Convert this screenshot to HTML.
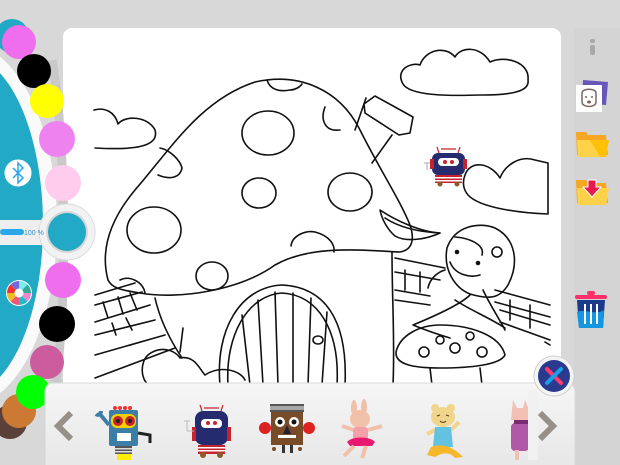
<!DOCTYPE html>
<html><head><meta charset="utf-8"><style>
html,body{margin:0;padding:0;width:620px;height:465px;overflow:hidden;background:#d8d8d8;font-family:"Liberation Sans",sans-serif}
</style></head><body>
<svg width="620" height="465" viewBox="0 0 620 465" xmlns="http://www.w3.org/2000/svg" style="position:absolute;left:0;top:0">
<defs>
<linearGradient id="bar" x1="0" y1="0" x2="0" y2="1"><stop offset="0" stop-color="#f6f6f6"/><stop offset="1" stop-color="#e6e6e6"/></linearGradient>
</defs>
<rect width="620" height="465" fill="#d8d8d8"/>
<rect x="574" y="28" width="46" height="437" fill="#d4d4d4"/>
<!-- canvas -->
<rect x="63" y="28" width="498" height="400" rx="9" fill="#fff"/>
<!-- drawing -->
<g fill="none" stroke="#111" stroke-width="1.6" stroke-linecap="round" stroke-linejoin="round">
<path d="M403,84 C395,70 410,62 420,65 C425,50 445,45 455,57 C460,47 480,45 490,62 C505,55 530,62 528,80 C530,92 510,95 480,95 C450,96 410,96 403,84Z"/>
<path d="M94,110 C105,107 115,112 118,124 C125,115 148,116 155,130 C160,148 130,150 95,148"/>
<path d="M465,175 C470,160 490,162 500,178 C505,165 520,155 535,160 L548,163 L548,214 C520,213 480,208 468,195 C462,188 463,180 465,175Z"/>
<path d="M108,280 C100,250 110,220 135,190 C170,150 200,100 255,82 C300,72 340,90 360,130 C380,170 400,200 410,225 C415,240 412,250 400,252 C360,250 310,245 275,265 C240,290 180,300 140,293 C120,290 112,288 108,280Z"/>
<ellipse cx="268" cy="133" rx="26" ry="22"/>
<ellipse cx="350" cy="192" rx="22" ry="19"/>
<ellipse cx="259" cy="193" rx="17" ry="15"/>
<ellipse cx="154" cy="230" rx="27" ry="23"/>
<ellipse cx="212" cy="276" rx="16" ry="14"/>
<path d="M160,148 C170,150 180,160 182,168 C180,178 170,180 158,175"/>
<path d="M291,246 C292,236 305,230 315,232 C330,236 335,245 334,252"/>
<path d="M267,80 C270,90 280,92 290,90 C295,90 300,87 302,84"/>
<path d="M325,107 C320,120 325,132 340,130"/>
<path d="M120,280 C130,275 143,282 145,293"/>
<path d="M380,210 C395,220 420,232 440,233 C425,240 405,242 395,236 C388,230 382,220 380,210Z"/><path d="M385,218 C400,228 420,232 440,233"/>
<path d="M355,130 L366,98 M372,163 L392,135"/>
<path d="M364,104 L375,96 L413,117 L410,133 L399,135 L365,113Z"/>
<path d="M155,298 C160,320 170,340 182,358 M392,252 C392,300 395,340 393,385"/>
<path d="M220,385 C215,330 240,287 282,285 C325,287 348,320 345,385"/>
<path d="M228,385 C225,335 248,295 282,293 C318,295 340,330 337,385"/>
<path d="M250,385 L242,315 M263,385 L258,300 M278,385 L275,292 M293,385 L293,293 M308,385 L311,298 M322,385 L327,312"/>
<ellipse cx="318" cy="340" rx="5" ry="4"/>
<path d="M95,295 L135,283 M95,305 L142,292 M95,322 L150,305 M95,335 L155,320 M95,355 L165,335 M95,378 L175,348 M103,302 L108,318 M118,297 L123,314 M130,293 L137,310 M112,323 L116,335 M126,318 L132,330"/>
<path d="M148,355 C140,362 140,380 150,386 M148,355 C160,345 175,350 180,358 C195,355 200,370 205,375 C220,365 240,370 245,380"/>
<path d="M180,352 L183,328"/>
<path d="M395,258 L445,268 M395,272 L440,280 M395,290 L430,296 M395,300 L430,305 M405,270 L405,290 M420,272 L420,292 M495,290 L550,305 M495,302 L550,317 M500,310 L550,325 M500,322 L550,340 M510,300 L510,320 M530,305 L530,328 M545,342 L550,345"/>
<path d="M447,248 C455,225 480,222 495,228 C515,238 520,262 508,285 C500,298 490,300 470,294 C455,288 443,270 447,248Z"/>
<path d="M455,237 C470,238 485,245 482,255"/>
<circle cx="457" cy="252" r="1.5" fill="#111"/><circle cx="478" cy="263" r="1.5" fill="#111"/>
<path d="M450,262 C455,275 470,278 480,275"/>
<circle cx="497" cy="252" r="5"/>
<path d="M445,270 C438,272 430,278 428,288 M470,295 C460,305 430,318 413,325 C425,330 440,335 450,338 M483,290 C490,305 500,320 505,330"/>
<path d="M455,300 C470,310 490,318 505,328"/>
<path d="M396,352 C400,335 420,325 440,325 C470,325 500,335 505,355 C500,365 470,368 440,368 C415,368 395,365 396,352Z"/>
<circle cx="424" cy="352" r="5"/><circle cx="455" cy="348" r="5"/><circle cx="482" cy="352" r="5"/><circle cx="440" cy="340" r="4"/><circle cx="470" cy="336" r="4"/>
<path d="M430,368 L432,385 M480,368 L482,385"/>
</g>
<g transform="translate(427,145)">
<rect x="5" y="8" width="33" height="22" rx="6" fill="#262a6e"/>
<rect x="3" y="14" width="4" height="10" fill="#c8232c"/><rect x="36" y="14" width="4" height="10" fill="#c8232c"/>
<rect x="11" y="13" width="21" height="8" rx="4" fill="#fff"/>
<circle cx="18" cy="17" r="2" fill="#c8232c"/><circle cx="25" cy="17" r="2" fill="#c8232c"/>
<rect x="8" y="30" width="27" height="8" fill="#c8232c"/><rect x="8" y="32" width="27" height="1.5" fill="#fff"/><rect x="8" y="35" width="27" height="1.5" fill="#fff"/>
<circle cx="13" cy="39" r="2.5" fill="#8b5a2b"/><circle cx="30" cy="39" r="2.5" fill="#8b5a2b"/>
<path d="M12,8 L10,2 M31,8 L33,2 M14,4 L29,4" stroke="#c8232c" stroke-width="1.2"/>
<path d="M0,18 L0,25 M-3,18 L3,18" stroke="#aaa" stroke-width="1"/>
</g>
<!-- left area -->
<rect x="44" y="380" width="19" height="85" fill="#cfcfcf"/>
<ellipse cx="-35" cy="225" rx="92" ry="182" fill="#fafafa"/>
<path d="M52,60 C66,140 68,300 55,390" fill="none" stroke="#c9c9c9" stroke-width="9"/>
<ellipse cx="-35" cy="225" rx="78" ry="170" fill="#21a9c6"/>
<!-- slider -->
<path d="M0,220 L42,220 C50,220 52,214 62,208 L62,256 C52,250 50,245 42,245 L0,245Z" fill="#eeeeee"/>
<rect x="0" y="229" width="24" height="6" rx="3" fill="#2aa7e6"/>
<circle cx="67" cy="232" r="28" fill="#f2f2f2" stroke="#dcdcdc" stroke-width="1"/>
<circle cx="67" cy="232" r="21" fill="#d6d6d6"/>
<circle cx="67" cy="232" r="19" fill="#21a9c6"/>
<text x="24" y="235" font-size="7" fill="#3a8fc8">100 %</text>
<!-- dots -->
<circle cx="12" cy="36" r="17" fill="#21a9c6"/>
<circle cx="19" cy="42" r="17" fill="#ee6eee"/>
<circle cx="34" cy="71" r="17" fill="#000"/>
<circle cx="47" cy="101" r="17" fill="#ffff00"/>
<circle cx="57" cy="139" r="18" fill="#ee82ee"/>
<circle cx="63" cy="183" r="18" fill="#ffccee"/>
<circle cx="63" cy="280" r="18" fill="#ee6eee"/>
<circle cx="57" cy="324" r="18" fill="#000"/>
<circle cx="47" cy="362" r="17" fill="#cc5c9e"/>
<circle cx="10" cy="422" r="17" fill="#5a4038"/>
<circle cx="19" cy="411" r="17" fill="#cc7a33"/>
<circle cx="33" cy="392" r="17" fill="#00ff00"/>
<circle cx="18" cy="173" r="14" fill="#fff" stroke="#21a9c6" stroke-width="1"/>
<path d="M13,168 L23,178 L18,183 L18,163 L23,168 L13,178" fill="none" stroke="#2aa7e6" stroke-width="1.5"/>
<g transform="translate(19,293)">
<circle r="13" fill="#fff"/>
<path d="M0,0 L0,-12 A12,12 0 0 1 8.5,-8.5Z" fill="#7ee"/>
<path d="M0,0 L8.5,-8.5 A12,12 0 0 1 12,0Z" fill="#3a9"/>
<path d="M0,0 L12,0 A12,12 0 0 1 8.5,8.5Z" fill="#e8c"/>
<path d="M0,0 L8.5,8.5 A12,12 0 0 1 0,12Z" fill="#2bc"/>
<path d="M0,0 L0,12 A12,12 0 0 1 -8.5,8.5Z" fill="#e57"/>
<path d="M0,0 L-8.5,8.5 A12,12 0 0 1 -12,0Z" fill="#eb2"/>
<path d="M0,0 L-12,0 A12,12 0 0 1 -8.5,-8.5Z" fill="#e33"/>
<path d="M0,0 L-8.5,-8.5 A12,12 0 0 1 0,-12Z" fill="#76d"/>
<circle r="4.5" fill="#fff"/>
</g>
<!-- right icons -->
<rect x="590" y="39" width="5" height="4" rx="2" fill="#a8a8a8"/><rect x="590" y="45" width="5" height="10" rx="2" fill="#a8a8a8"/>
<path d="M583,80 L608,82 L606,105 L582,103Z" fill="#6a55b8"/>
<rect x="576" y="85" width="26" height="27" fill="#fff"/>
<path d="M582,93 C582,88 596,88 596,93 L596,102 C596,108 582,108 582,102Z" fill="none" stroke="#7a6660" stroke-width="1.5"/>
<circle cx="586" cy="97" r="1" fill="#7a6660"/><circle cx="592" cy="97" r="1" fill="#7a6660"/><ellipse cx="589" cy="102" rx="2" ry="1.5" fill="#7a6660"/>
<path d="M576,132 L586,132 L588,135 L606,135 L608,155 L577,155Z" fill="#f5a623"/>
<path d="M577,140 L609,140 L606,157 L578,157Z" fill="#ffd24a"/>
<path d="M590,140 L609,140 L606,157 L600,157Z" fill="#ffc107"/>
<path d="M576,180 L586,180 L588,183 L606,183 L608,203 L577,203Z" fill="#f5a623"/>
<path d="M577,188 L609,188 L606,205 L578,205Z" fill="#ffd24a"/>
<path d="M588,180 L596,180 L596,187 L601,187 L592,197 L583,187 L588,187Z" fill="#e8194f" stroke="#fff" stroke-width="1"/>
<rect x="575" y="295" width="32" height="4" rx="2" fill="#ff2f6a"/>
<rect x="587" y="291" width="8" height="4" rx="2" fill="#ff2f6a"/>
<path d="M577,300 L605,300 L603,328 L579,328Z" fill="#1a3a8a"/>
<path d="M577,312 C585,308 595,316 604,310 L603,328 L579,328Z" fill="#1596e0"/>
<rect x="584" y="304" width="2" height="20" fill="#fff"/><rect x="590" y="304" width="2" height="20" fill="#fff"/><rect x="596" y="304" width="2" height="20" fill="#fff"/>
<!-- bottom bar -->
<rect x="45" y="383" width="530" height="90" rx="8" fill="url(#bar)"/>
<rect x="45" y="383" width="530" height="90" rx="8" fill="none" stroke="#dadada"/>
<path d="M71,413 L58,426 L71,439" fill="none" stroke="#969089" stroke-width="6"/>
<path d="M540,413 L553,426 L540,439" fill="none" stroke="#969089" stroke-width="6"/>
<g transform="translate(95,405)">
<circle cx="20" cy="3" r="2" fill="#e33"/><circle cx="25" cy="3" r="2" fill="#e33"/><circle cx="30" cy="3" r="2" fill="#e33"/><circle cx="35" cy="3" r="2" fill="#e33"/>
<rect x="14" y="5" width="29" height="36" rx="2" fill="#3d7ea6"/>
<rect x="16" y="9" width="25" height="14" rx="6" fill="#f2d000"/>
<circle cx="23" cy="16" r="5" fill="#c8232c"/><circle cx="35" cy="16" r="5" fill="#c8232c"/>
<circle cx="23" cy="16" r="2" fill="#222"/><circle cx="35" cy="16" r="2" fill="#222"/>
<rect x="22" y="28" width="14" height="8" fill="#fff"/>
<path d="M14,20 L4,8 M1,9 C3,11 6,9 6,6" stroke="#3d7ea6" stroke-width="4" fill="none"/>
<path d="M43,28 L55,30 L55,38" stroke="#222" stroke-width="3" fill="none"/>
<rect x="20" y="41" width="17" height="8" fill="#555"/><rect x="20" y="43" width="17" height="1.5" fill="#ddd"/><rect x="20" y="46" width="17" height="1.5" fill="#ddd"/>
<rect x="22" y="49" width="14" height="6" fill="#ffee00"/>
</g>
<g transform="translate(190,403)">
<path d="M12,8 L10,2 M31,8 L33,2 M14,5 L29,5" stroke="#c8232c" stroke-width="1.2"/>
<rect x="5" y="8" width="33" height="34" rx="8" fill="#262a6e"/>
<rect x="2" y="24" width="4" height="14" fill="#c8232c"/><rect x="37" y="24" width="4" height="14" fill="#c8232c"/>
<rect x="11" y="16" width="21" height="9" rx="4" fill="#fff"/>
<circle cx="18" cy="20" r="2" fill="#c8232c"/><circle cx="25" cy="20" r="2" fill="#c8232c"/>
<rect x="8" y="42" width="27" height="9" fill="#c8232c"/><rect x="8" y="44" width="27" height="1.5" fill="#fff"/><rect x="8" y="47" width="27" height="1.5" fill="#fff"/>
<circle cx="13" cy="52" r="3" fill="#8b5a2b"/><circle cx="30" cy="52" r="3" fill="#8b5a2b"/>
<path d="M-3,18 L-3,28 M-6,18 L0,18 M-3,28 L4,28" stroke="#bbb" stroke-width="1" fill="none"/>
</g>
<g transform="translate(262,403)">
<rect x="8" y="1" width="34" height="8" fill="#555"/><rect x="8" y="3" width="34" height="4" fill="#ddd" opacity=".6"/>
<rect x="9" y="9" width="32" height="33" fill="#7a4b27"/>
<circle cx="3" cy="25" r="6" fill="#d22"/><circle cx="47" cy="25" r="6" fill="#d22"/>
<circle cx="18" cy="19" r="5" fill="#fff"/><circle cx="32" cy="19" r="5" fill="#fff"/>
<circle cx="18" cy="19" r="2.5" fill="#111"/><circle cx="32" cy="19" r="2.5" fill="#111"/>
<path d="M25,22 L21,31 L29,31Z" fill="#223"/>
<rect x="16" y="32" width="18" height="3" fill="#fff"/>
<rect x="20" y="42" width="3" height="8" fill="#333"/><rect x="28" y="42" width="3" height="8" fill="#333"/>
<circle cx="12" cy="46" r="2" fill="#7a4b27"/><circle cx="38" cy="46" r="2" fill="#7a4b27"/>
</g>
<g transform="translate(342,400)">
<ellipse cx="12" cy="8" rx="3" ry="8" fill="#f0c0a8"/><ellipse cx="22" cy="7" rx="3" ry="8" fill="#f0c0a8"/>
<ellipse cx="18" cy="19" rx="10" ry="9" fill="#f0c0a8"/>
<path d="M0,26 L12,30 M26,30 L40,26" stroke="#f0c0a8" stroke-width="4"/>
<rect x="11" y="27" width="15" height="15" rx="3" fill="#f2a0aa"/>
<path d="M5,42 C10,36 28,36 33,42 L30,46 L8,46Z" fill="#e8196e"/>
<path d="M12,46 L2,56 M24,46 L20,58" stroke="#f0c0a8" stroke-width="4"/>
</g>
<g transform="translate(425,402)">
<circle cx="10" cy="6" r="4" fill="#f0d58a"/><circle cx="26" cy="6" r="4" fill="#f0d58a"/>
<ellipse cx="18" cy="15" rx="12" ry="10" fill="#f0d58a"/>
<path d="M12,14 L15,13 M21,13 L24,14 M15,19 C17,21 19,21 21,19" stroke="#5a3a20" stroke-width="1" fill="none"/>
<path d="M2,32 L10,28 M26,28 L34,20" stroke="#f0d58a" stroke-width="4"/>
<path d="M10,25 L26,25 L28,45 L8,45Z" fill="#62c2e0"/>
<path d="M6,45 C15,42 25,42 38,55 L30,56 C25,50 18,50 10,55 L2,53Z" fill="#f5b82a"/>
</g>
<g transform="translate(505,398)">
<path d="M8,2 L12,10 L18,10 L20,2 L24,12 L24,22 L6,22Z" fill="#f2c0b4"/>
<rect x="6" y="25" width="18" height="28" rx="4" fill="#b058a8"/>
<rect x="9" y="22" width="14" height="4" fill="#7a2a70"/>
<rect x="10" y="52" width="4" height="10" fill="#f2c0b4"/>
</g>
<rect x="528" y="390" width="10" height="70" fill="#f1f1f1"/>
<circle cx="554" cy="376" r="20" fill="#f4f4f4" stroke="#d0d0d0"/>
<circle cx="554" cy="376" r="16" fill="#2b3a8e"/>
<path d="M547,369 L561,383" stroke="#ff3b6b" stroke-width="4" stroke-linecap="round"/>
<path d="M561,369 L547,383" stroke="#1aa0e6" stroke-width="4" stroke-linecap="round"/>
</svg>
</body></html>
